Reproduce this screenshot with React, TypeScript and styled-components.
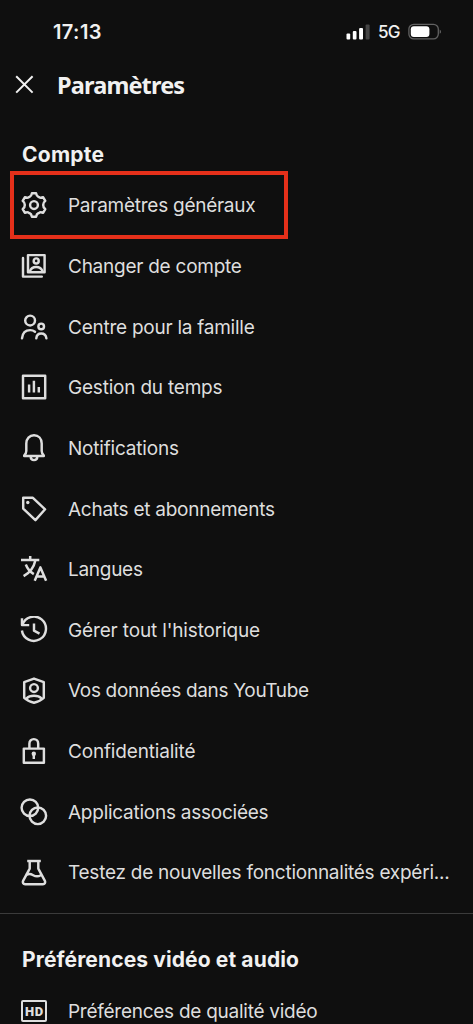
import React from "react";
import styled, { createGlobalStyle } from "styled-components";

const GlobalStyle = createGlobalStyle`
  html, body { margin: 0; background: #0f0f0f; }
  body { overflow: hidden; }
  * { box-sizing: border-box; }
`;

const Screen = styled.main`
  width: 100%;
  height: 1024px;
  overflow: hidden;
  background: #0f0f0f;
  color: #f1f1f1;
  font-family: Inter, "Liberation Sans", sans-serif;
`;

const StatusBar = styled.div`
  display: flex;
  align-items: center;
  justify-content: space-between;
  height: 63px;
  padding: 0 31px 0 53px;
`;

const Clock = styled.span`
  font-size: 20px;
  font-weight: 600;
  letter-spacing: 0.4px;
`;

const StatusIcons = styled.div`
  display: flex;
  align-items: center;
`;

const Network = styled.span`
  width: 37px;
  padding-left: 7px;
  font-size: 17px;
  font-weight: 500;
  letter-spacing: -0.8px;
`;

const TitleBar = styled.header`
  display: flex;
  align-items: center;
  gap: 22px;
  height: 44px;
  padding-left: 14px;
`;

const CloseButton = styled.button`
  display: flex;
  padding: 0;
  border: 0;
  background: none;
  color: inherit;
`;

const Title = styled.h1`
  margin: 0;
  font-family: "Noto Sans", sans-serif;
  font-size: 23.5px;
  line-height: 32px;
  font-weight: 700;
  letter-spacing: -0.85px;
`;

const Section = styled.section<{ $top: number }>`
  padding-top: ${(p) => p.$top}px;
`;

const SectionTitle = styled.h2<{ $spacing: number }>`
  margin: 0;
  padding-left: 22px;
  font-size: 21px;
  line-height: 41px;
  font-weight: 700;
  letter-spacing: ${(p) => p.$spacing}px;
  white-space: nowrap;
`;

const List = styled.ul`
  margin: 0;
  padding: 0;
  list-style: none;
`;

const Row = styled.li`
  position: relative;
  display: flex;
  align-items: center;
  gap: 20px;
  height: 60.67px;
  padding-left: 20px;
  color: #dedede;
`;

const Label = styled.span<{ $spacing: number }>`
  padding-top: 1.8px;
  font-size: 19px;
  line-height: 28px;
  letter-spacing: ${(p) => p.$spacing}px;
  white-space: nowrap;
`;

const Highlight = styled.div`
  position: absolute;
  left: 10px;
  top: -4px;
  width: 278px;
  height: 68px;
  border: 4.5px solid #e5301a;
`;

const Divider = styled.hr`
  width: 100%;
  height: 1px;
  margin: 10px 0 0;
  border: 0;
  background: #3b3b3b;
`;

const Glyph = styled.svg`
  flex: none;
  width: 28px;
  height: 28px;
  fill: none;
  stroke: currentColor;
  stroke-width: 2.45;
  stroke-linejoin: round;
  stroke-linecap: round;
`;

const polar = (r: number, deg: number) => {
  const a = (deg * Math.PI) / 180;
  return `${(14 + r * Math.cos(a)).toFixed(2)} ${(14 + r * Math.sin(a)).toFixed(2)}`;
};

const gearPath =
  [0, 1, 2, 3, 4, 5]
    .map((k) => {
      const t = -90 + k * 60;
      return `${k ? "L" : "M"}${polar(12, t - 10)}L${polar(12, t + 10)}Q${polar(9.3, t + 17)} ${polar(9.4, t + 25)}Q${polar(9.1, t + 30)} ${polar(9.4, t + 35)}Q${polar(9.3, t + 43)} ${polar(12, t + 50)}`;
    })
    .join("") + "Z";

const icons = {
  gear: (
    <>
      <path d={gearPath} />
      <circle cx="14" cy="14" r="3.9" />
    </>
  ),
  accounts: (
    <>
      <path d="M8 3.1h16.6v17.2H8zM3 6v18.6h18.8" />
      <circle cx="16.2" cy="8.9" r="2.5" />
      <path d="M9.8 19.4c1-3 3.3-4.4 6.4-4.4s5.4 1.4 6.4 4.4" />
    </>
  ),
  family: (
    <>
      <circle cx="10.1" cy="7.5" r="4.9" />
      <path d="M2 25.3c.5-5.1 3.6-8.2 8.2-8.2 2 0 3.5.6 4.8 1.6" />
      <circle cx="21.2" cy="13.4" r="2.8" />
      <path d="M16.3 25.3c.3-2.9 2-4.8 4.9-4.8s4.8 1.9 5.2 4.8" />
    </>
  ),
  time: (
    <>
      <path d="M3 2.8h22.2v22.4H3z" />
      <path strokeLinecap="butt" d="M9.1 11.6v7.8M13.9 7.7v11.7M18.8 14v5.4" />
    </>
  ),
  bell: (
    <>
      <path d="M4.2 22v-.6c1.5-1.2 2.1-2.5 2.1-4.3V9.5c0-4.9 3.2-8.2 7.7-8.2s7.7 3.3 7.7 8.2v7.6c0 1.8.6 3.1 2.1 4.3v.6z" />
      <path d="M10.7 22.6c0 2.1 1.3 3.5 3.3 3.5s3.3-1.4 3.3-3.5" />
    </>
  ),
  tag: (
    <>
      <path d="M3.2 2.8h9.7l12.2 11.5-9.7 10.8L3.2 13.6z" />
      <circle cx="7.8" cy="7.5" r="1.7" fill="currentColor" stroke="none" />
    </>
  ),
  languages: (
    <path
      strokeWidth="2.5"
      strokeLinecap="butt"
      d="M1 5.1h18.3M10.2 1v4M15.4 5.2c-1.3 6.3-4.8 12-11.8 16M5.8 9.5c1.5 4 4.2 7.3 8 9.6M14.7 25.8l5.7-13.4 5.7 13.4M16.4 21.5h8"
    />
  ),
  history: (
    <>
      <path strokeLinecap="butt" d="M2 2.2v6.9h7.2" />
      <path strokeLinecap="butt" d="M2.4 8.9A12.1 12.1 0 1 1 1.9 14.5" />
      <path strokeLinecap="butt" d="M14 7.4v7.3l5.5 2.9" />
    </>
  ),
  shield: (
    <>
      <path d="M14 1.6l9.8 3.5v15.7c-2.3 2.2-5.6 3.8-9.8 4.9-4.2-1.1-7.5-2.7-9.8-4.9V5.1z" />
      <circle cx="14" cy="11" r="3.9" />
      <path d="M6.4 21.5c1.7-1.9 4.3-2.8 7.6-2.8s5.9.9 7.6 2.8" />
    </>
  ),
  lock: (
    <>
      <path d="M3.8 11.6h20.1v14.1H3.8zM9.4 11.5V6.7c0-2.7 1.8-4.6 4.4-4.6s4.4 1.9 4.4 4.6v4.8" />
      <circle cx="13.8" cy="16.8" r="2.2" fill="currentColor" stroke="none" />
      <path strokeLinecap="butt" d="M13.8 17v5" />
    </>
  ),
  apps: (
    <>
      <circle cx="9.9" cy="9.7" r="8.3" />
      <circle cx="17.8" cy="17.8" r="8.3" />
    </>
  ),
  flask: (
    <>
      <path strokeLinecap="butt" d="M7.2 2h13.6" />
      <path d="M9.7 2.3v7.3L3.1 21.8c-.8 1.8.1 3.4 2 3.4h17.8c1.9 0 2.8-1.6 2-3.4L18.3 9.6V2.3" />
      <path d="M6.9 15.5c2.3-.9 4.2-.5 6.3.7 2.6 1.5 4.9 1.6 7.6.1" />
    </>
  ),
};

const HdBadge = styled.span`
  display: flex;
  flex: none;
  align-items: center;
  justify-content: center;
  width: 26px;
  height: 22px;
  margin: 0 1px;
  padding: 2px 0 0 1px;
  border: 2.4px solid currentColor;
  border-radius: 2px;
  font-family: Roboto, sans-serif;
  font-size: 13px;
  line-height: 1;
  font-weight: 900;
  letter-spacing: 0.7px;
`;

const accountRows: { icon: keyof typeof icons; text: string; spacing: number }[] = [
  { icon: "gear", text: "Paramètres généraux", spacing: -0.26 },
  { icon: "accounts", text: "Changer de compte", spacing: -0.25 },
  { icon: "family", text: "Centre pour la famille", spacing: -0.25 },
  { icon: "time", text: "Gestion du temps", spacing: -0.21 },
  { icon: "bell", text: "Notifications", spacing: -0.19 },
  { icon: "tag", text: "Achats et abonnements", spacing: -0.26 },
  { icon: "languages", text: "Langues", spacing: -0.28 },
  { icon: "history", text: "Gérer tout l'historique", spacing: -0.15 },
  { icon: "shield", text: "Vos données dans YouTube", spacing: -0.33 },
  { icon: "lock", text: "Confidentialité", spacing: -0.17 },
  { icon: "apps", text: "Applications associées", spacing: -0.25 },
  { icon: "flask", text: "Testez de nouvelles fonctionnalités expéri...", spacing: -0.25 },
];

export default function App() {
  return (
    <Screen>
      <GlobalStyle />
      <StatusBar>
        <Clock>17:13</Clock>
        <StatusIcons>
          <svg width="25" height="18" viewBox="0 0 25 18" fill="#fff">
            <rect x="0.5" y="10.5" width="3.7" height="6" rx="1" />
            <rect x="6.8" y="8" width="3.7" height="8.5" rx="1" />
            <rect x="13.1" y="5" width="3.9" height="11.5" rx="1" />
            <rect x="19.6" y="1.5" width="4" height="15" rx="1" fill="#454545" />
          </svg>
          <Network>5G</Network>
          <svg width="34" height="18" viewBox="0 0 34 18">
            <rect x="0.9" y="1.3" width="29.4" height="14.6" rx="4.8" fill="none" stroke="#626262" strokeWidth="1.3" />
            <rect x="2.8" y="3.2" width="18.6" height="10.8" rx="3" fill="#fff" />
            <path d="M31.7 6.5c1.8.8 1.8 3.5 0 4.3z" fill="#626262" />
          </svg>
        </StatusIcons>
      </StatusBar>
      <TitleBar>
        <CloseButton aria-label="Fermer">
          <svg width="21" height="21" viewBox="0 0 21 21" fill="none" stroke="currentColor" strokeWidth="2">
            <path d="M2.2 1.2l16.4 16.4M18.6 1.2L2.2 17.6" />
          </svg>
        </CloseButton>
        <Title>Paramètres</Title>
      </TitleBar>
      <Section $top={27}>
        <SectionTitle $spacing={0.25}>Compte</SectionTitle>
        <List>
          {accountRows.map((row) => (
            <Row key={row.text}>
              <Glyph viewBox="0 0 28 28">{icons[row.icon]}</Glyph>
              <Label $spacing={row.spacing}>{row.text}</Label>
              {row.icon === "gear" && <Highlight />}
            </Row>
          ))}
        </List>
      </Section>
      <Divider />
      <Section $top={25.5}>
        <SectionTitle $spacing={0.12}>Préférences vidéo et audio</SectionTitle>
        <List>
          <Row>
            <HdBadge>HD</HdBadge>
            <Label $spacing={-0.26}>Préférences de qualité vidéo</Label>
          </Row>
        </List>
      </Section>
    </Screen>
  );
}
